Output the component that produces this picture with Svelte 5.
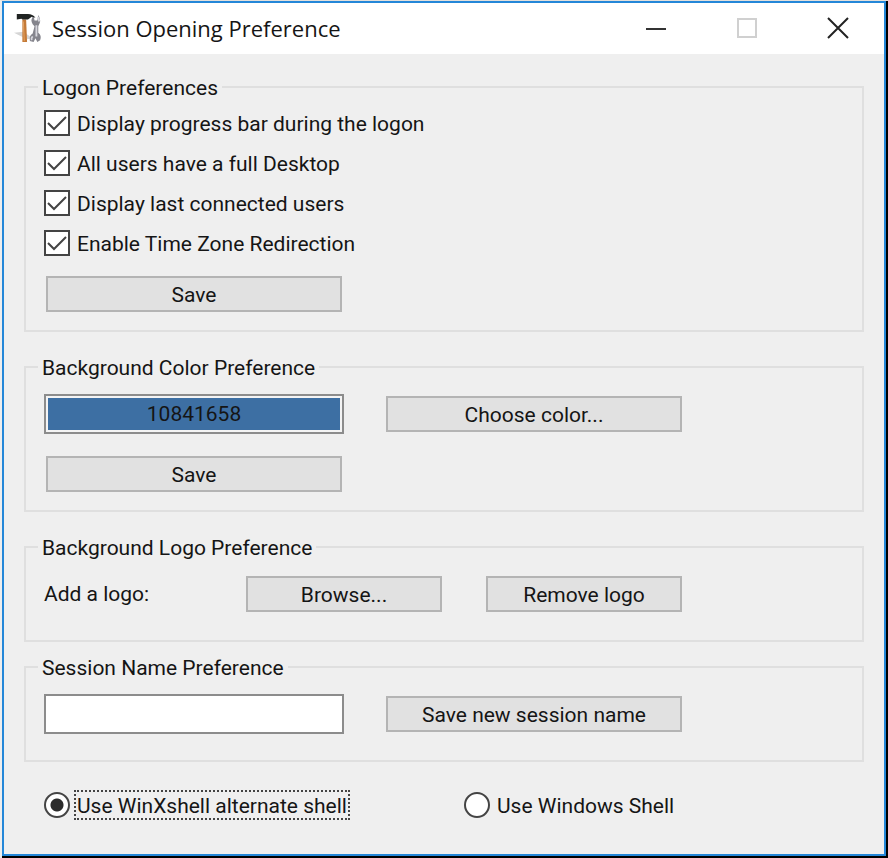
<script lang="ts">
/**
 * Session opening preference dialog
 * Logon options, background color and logo, session name and shell choice
 *
 * @component
 */

interface LogonOption {
	id: string;
	label: string;
	checked: boolean;
}

interface ShellOption {
	id: string;
	label: string;
}

let logonOptions: LogonOption[] = $state([
	{ id: 'progress', label: 'Display progress bar during the logon', checked: true },
	{ id: 'desktop', label: 'All users have a full Desktop', checked: true },
	{ id: 'last-users', label: 'Display last connected users', checked: true },
	{ id: 'time-zone', label: 'Enable Time Zone Redirection', checked: true },
]);

const shells: ShellOption[] = [
	{ id: 'winxshell', label: 'Use WinXshell alternate shell' },
	{ id: 'windows', label: 'Use Windows Shell' },
];

let shell = $state('winxshell');
let color = $state('10841658');
let sessionName = $state('');
</script>

<div class="screen">
	<main class="window">
		<header class="titlebar">
			<svg class="app-icon" viewBox="0 0 30 32" aria-hidden="true">
				<path d="M0 21 L10 20 L20 27 L14 28 Z" fill="#d5d5d5" />
				<path d="M21 3 Q17 7 20 12 L22 14 L20 22 Q16 24 17 30 L21 31 L23 27 L25 31 L28 29 Q30 24 26 21 L26 14 Q30 8 26 2 L25 8 L22 8 Z" fill="#85858d" />
				<path d="M24 13 V25 M20 25 Q18 27 19 29 M26 4 L27 9" stroke="#d7d7de" stroke-width="2" fill="none" />
				<path d="M9 7 H13 L14 31 H9 Z" fill="#c47a38" />
				<path d="M10 9 L11 30" stroke="#e5a767" stroke-width="1" />
				<path d="M3 1 H15 Q20 1 23 5 L19 4 L15 7 H9 L8 6 L3 7 Z" fill="#202322" />
			</svg>
			<h1 class="title">Session Opening Preference</h1>
			<div class="window-controls">
				<button class="control" aria-label="Minimize">
					<svg viewBox="0 0 22 22"><path d="M1 12 H21" stroke="#333" stroke-width="2" /></svg>
				</button>
				<button class="control" aria-label="Maximize" disabled>
					<svg viewBox="0 0 22 22"><rect x="2" y="2" width="18" height="18" fill="none" stroke="#d0d0d0" stroke-width="2" /></svg>
				</button>
				<button class="control" aria-label="Close">
					<svg viewBox="0 0 22 22"><path d="M1 1 L21 21 M21 1 L1 21" stroke="#222" stroke-width="2" /></svg>
				</button>
			</div>
		</header>

		<form class="content" onsubmit={(e) => e.preventDefault()}>
			<fieldset class="group">
				<legend>Logon Preferences</legend>
				<div class="options">
					{#each logonOptions as option (option.id)}
						<label class="option">
							<span class="box">
								<input type="checkbox" bind:checked={option.checked} />
								<svg class="tick" viewBox="0 0 26 26" aria-hidden="true">
									<path d="M4 13 L10 19 L22 7" fill="none" stroke="#444" stroke-width="2" />
								</svg>
							</span>
							<span class="option-label">{option.label}</span>
						</label>
					{/each}
				</div>
				<div class="row save-row">
					<button class="button left">Save</button>
				</div>
			</fieldset>

			<fieldset class="group">
				<legend>Background Color Preference</legend>
				<div class="row field-row">
					<input class="field color left" type="text" aria-label="Background color" readonly bind:value={color} />
					<button class="button right">Choose color...</button>
				</div>
				<div class="row second-row">
					<button class="button left">Save</button>
				</div>
			</fieldset>

			<fieldset class="group compact">
				<legend>Background Logo Preference</legend>
				<div class="row field-row">
					<span class="caption">Add a logo:</span>
					<button class="button browse">Browse...</button>
					<button class="button remove">Remove logo</button>
				</div>
			</fieldset>

			<fieldset class="group compact">
				<legend>Session Name Preference</legend>
				<div class="row field-row">
					<input class="field left" type="text" aria-label="Session name" bind:value={sessionName} />
					<button class="button right">Save new session name</button>
				</div>
			</fieldset>

			<div class="shells" role="radiogroup" aria-label="Shell">
				{#each shells as item (item.id)}
					<label class="option">
						<input type="radio" name="shell" value={item.id} bind:group={shell} />
						<span class="option-label" class:focused={item.id === shell}>{item.label}</span>
					</label>
				{/each}
			</div>
		</form>
	</main>
</div>

<style>
	:global(body) {
		margin: 0;
		background: #000;
	}

	.screen {
		display: flex;
		box-sizing: border-box;
		min-height: 100vh;
		padding: 0 2px 2px 0;
		border-top: 1px solid #e4e0dc;
		border-left: 2px solid #eee;
		background: #000;
	}

	.window {
		flex: 1;
		box-sizing: border-box;
		min-width: 0;
		border: 2px solid #2487d8;
		background: #efefef;
		color: #151515;
		font-family: Roboto, 'Liberation Sans', sans-serif;
		font-size: 21px;
		line-height: 24px;
	}

	/* Title bar */
	.titlebar {
		display: flex;
		align-items: center;
		height: 49px;
		padding: 0 1px 2px 10px;
		background: #fff;
	}

	.app-icon {
		width: 28px;
		height: 32px;
	}

	.title {
		flex: 1;
		margin: 0 0 0 10px;
		font-family: 'Open Sans', 'Noto Sans', sans-serif;
		font-size: 22px;
		font-weight: 400;
		line-height: 30px;
		white-space: nowrap;
	}

	.window-controls {
		display: flex;
	}

	.control {
		display: grid;
		place-items: center;
		width: 91px;
		height: 48px;
		padding: 0;
		border: 0;
		background: none;
	}

	.control svg {
		width: 22px;
		height: 22px;
	}

	/* Group boxes */
	.content {
		padding: 20px 20px 26px;
	}

	.group {
		min-width: 0;
		margin: 0 0 22px;
		padding: 0 18px 16px;
		border: 2px solid #dfdfdf;
	}

	.group.compact {
		margin-bottom: 12px;
		padding-bottom: 26px;
	}

	legend {
		margin-left: -6px;
		padding: 2px 4px 0;
	}

	/* Columns shared by every row inside a group */
	.row {
		display: grid;
		grid-template-columns: 10fr 5fr 2fr 3fr 2fr 10fr 8fr;
		align-items: center;
	}

	.field-row {
		min-height: 40px;
		padding-top: 14px;
	}

	.save-row {
		padding-top: 11px;
	}

	.second-row {
		padding-top: 20px;
	}

	.left {
		grid-column: 1 / 3;
	}

	.right {
		grid-column: 4 / 7;
	}

	.browse {
		grid-column: 2 / 5;
	}

	.remove {
		grid-column: 6 / 7;
	}

	.button {
		height: 36px;
		margin: 2px;
		padding: 1px 0 0;
		border: 2px solid #b4b4b4;
		background: #e1e1e1;
		color: inherit;
		font: inherit;
		white-space: nowrap;
	}

	.field {
		box-sizing: border-box;
		width: 100%;
		height: 40px;
		padding: 2px;
		border: 2px solid #8c8c8c;
		border-radius: 0;
		background: #fff;
		color: inherit;
		font: inherit;
		outline: 0;
	}

	.field.color {
		background: linear-gradient(#3d6fa3, #3d6fa3) content-box, #f4f4f4;
		text-align: center;
	}

	/* Check boxes and radio buttons */
	.options {
		padding-top: 3px;
	}

	.option {
		display: flex;
		align-items: center;
		height: 40px;
	}

	.option-label {
		margin-left: 4px;
		padding: 2px 1px 0;
		border: 2px solid transparent;
		white-space: nowrap;
	}

	.option-label.focused {
		border: 2px dotted #444;
	}

	.box {
		display: grid;
		width: 26px;
		height: 26px;
	}

	.box input,
	.tick {
		grid-area: 1 / 1;
	}

	.tick {
		visibility: hidden;
		pointer-events: none;
	}

	.box input:checked + .tick {
		visibility: visible;
	}

	input[type='checkbox'],
	input[type='radio'] {
		appearance: none;
		box-sizing: border-box;
		width: 26px;
		height: 26px;
		margin: 0;
		border: 2px solid #444;
		background: #fff;
	}

	input[type='radio'] {
		border-radius: 50%;
	}

	input[type='radio']:checked {
		background: radial-gradient(circle, #2c2c2c 6px, #fff 7px);
	}

	.shells {
		display: grid;
		grid-template-columns: 21fr 19fr;
		padding: 11px 20px 0;
	}
</style>
